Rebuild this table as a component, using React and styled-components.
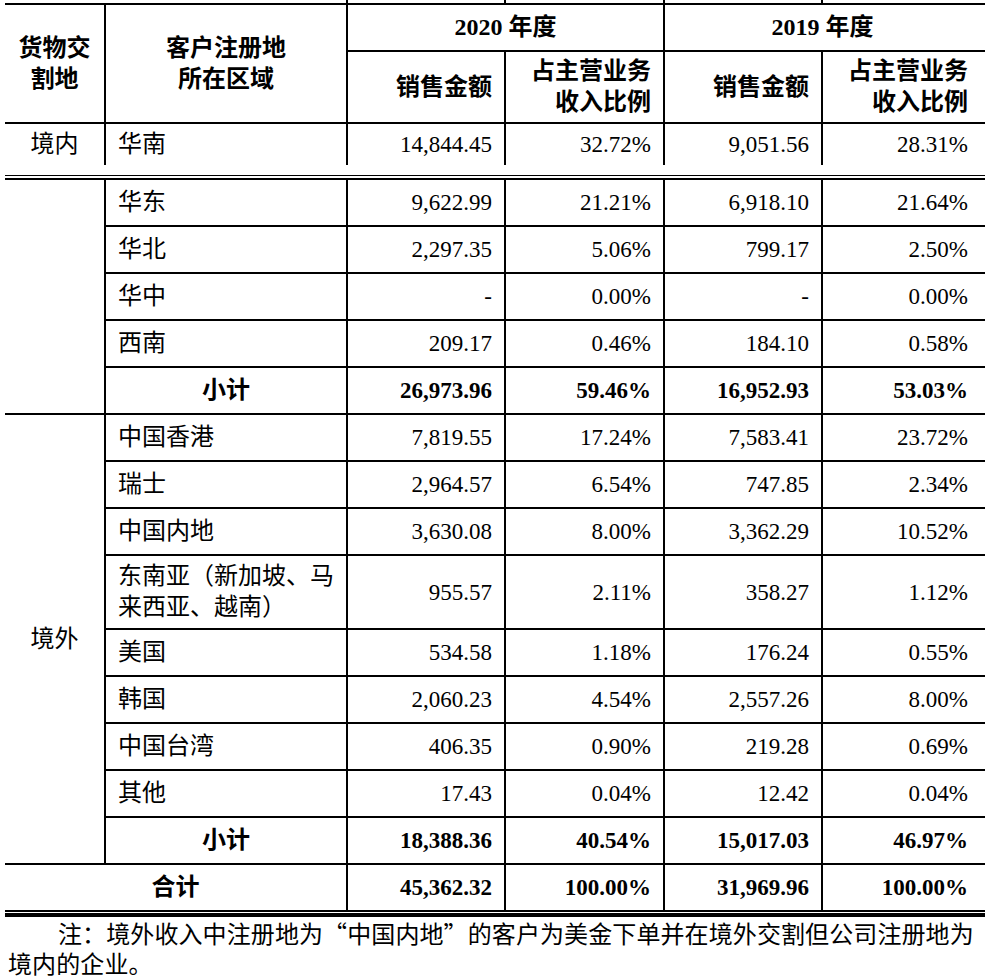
import React from "react";
import styled, { createGlobalStyle } from "styled-components";

const GlobalStyle = createGlobalStyle`
  html, body { margin: 0; padding: 0; background: #fff; }
  body {
    font-family: "Liberation Serif", "Noto Sans CJK SC", serif;
    color: #000;
  }
`;

const Page = styled.div`
  width: 985px;
  padding-left: 5px;
  box-sizing: border-box;
`;

const Stub = styled.div`
  display: grid;
  grid-template-columns: 341px 158px 159px 158px 1fr;
  height: 3px;
  width: 980px;
`;

const StubCell = styled.div`
  border-left: ${(p) => (p.$line ? "2px solid #000" : "none")};
`;

const Table = styled.table`
  width: 980px;
  border-collapse: collapse;
  table-layout: fixed;
  font-size: 23px;
  line-height: 31px;
  border-left: hidden;
  border-right: hidden;
  border-top: 2px solid #000;
  border-bottom: ${(p) => (p.$open ? "hidden" : "2px solid #000")};
`;

const Row = styled.tr`
  height: ${(p) => p.$h || 47}px;
`;

const Cell = styled.td`
  border: 2px solid #000;
  padding: 0 12px;
  text-align: ${(p) => p.$align || "left"};
  font-weight: ${(p) => (p.$bold ? 700 : 400)};
  vertical-align: middle;
  white-space: nowrap;
  &:last-child {
    padding-right: 17px;
  }
`;

const TextCell = styled(Cell)`
  font-size: 24px;
`;

const Divider = styled.div`
  width: 980px;
  border-top: 1px solid #000;
  margin-top: 10px;
  margin-bottom: 2px;
`;

const BottomRule = styled.div`
  width: 980px;
  height: 4px;
  background: #000;
  margin-top: 1px;
`;

const Note = styled.p`
  margin: 1px 0 0;
  padding-left: 3px;
  font-size: 24px;
  line-height: 30px;
  letter-spacing: 0.1px;
  text-indent: 50px;
  font-family: "Noto Sans CJK SC", "Liberation Serif", sans-serif;
`;

const Cols = () => (
  <colgroup>
    <col style={{ width: 100 }} />
    <col style={{ width: 242 }} />
    <col style={{ width: 158 }} />
    <col style={{ width: 159 }} />
    <col style={{ width: 158 }} />
    <col style={{ width: 163 }} />
  </colgroup>
);

const domestic = [
  [["华东"], "9,622.99", "21.21%", "6,918.10", "21.64%"],
  [["华北"], "2,297.35", "5.06%", "799.17", "2.50%"],
  [["华中"], "-", "0.00%", "-", "0.00%"],
  [["西南"], "209.17", "0.46%", "184.10", "0.58%"],
];

const overseas = [
  [["中国香港"], "7,819.55", "17.24%", "7,583.41", "23.72%"],
  [["瑞士"], "2,964.57", "6.54%", "747.85", "2.34%"],
  [["中国内地"], "3,630.08", "8.00%", "3,362.29", "10.52%"],
  [["东南亚（新加坡、马", "来西亚、越南）"], "955.57", "2.11%", "358.27", "1.12%", 74],
  [["美国"], "534.58", "1.18%", "176.24", "0.55%"],
  [["韩国"], "2,060.23", "4.54%", "2,557.26", "8.00%"],
  [["中国台湾"], "406.35", "0.90%", "219.28", "0.69%"],
  [["其他"], "17.43", "0.04%", "12.42", "0.04%"],
];

const Lines = ({ parts }) =>
  parts.map((t, i) => (
    <React.Fragment key={i}>
      {i > 0 && <br />}
      {t}
    </React.Fragment>
  ));

const Values = ({ v, bold }) => (
  <>
    {v.map((x, i) => (
      <Cell key={i} $align="right" $bold={bold}>
        {x}
      </Cell>
    ))}
  </>
);

export default function App() {
  return (
    <>
      <GlobalStyle />
      <Page>
        <Stub>
          <StubCell />
          <StubCell $line />
          <StubCell $line />
          <StubCell $line />
          <StubCell $line />
        </Stub>
        <Table $open>
          <Cols />
          <tbody>
            <Row $h={47}>
              <TextCell rowSpan={2} $align="center" $bold>
                <Lines parts={["货物交", "割地"]} />
              </TextCell>
              <TextCell rowSpan={2} $align="center" $bold>
                <Lines parts={["客户注册地", "所在区域"]} />
              </TextCell>
              <TextCell colSpan={2} $align="center" $bold>
                2020 年度
              </TextCell>
              <TextCell colSpan={2} $align="center" $bold>
                2019 年度
              </TextCell>
            </Row>
            <Row $h={72}>
              <TextCell $align="right" $bold>销售金额</TextCell>
              <TextCell $align="right" $bold>
                <Lines parts={["占主营业务", "收入比例"]} />
              </TextCell>
              <TextCell $align="right" $bold>销售金额</TextCell>
              <TextCell $align="right" $bold>
                <Lines parts={["占主营业务", "收入比例"]} />
              </TextCell>
            </Row>
            <Row $h={42}>
              <TextCell $align="center">境内</TextCell>
              <TextCell>华南</TextCell>
              <Values v={["14,844.45", "32.72%", "9,051.56", "28.31%"]} />
            </Row>
          </tbody>
        </Table>
        <Divider />
        <Table>
          <Cols />
          <tbody>
            {domestic.map((r, i) => (
              <Row key={r[0][0]}>
                {i === 0 && <Cell rowSpan={5} />}
                <TextCell>
                  <Lines parts={r[0]} />
                </TextCell>
                <Values v={r.slice(1, 5)} />
              </Row>
            ))}
            <Row>
              <TextCell $align="center" $bold>小计</TextCell>
              <Values bold v={["26,973.96", "59.46%", "16,952.93", "53.03%"]} />
            </Row>
            {overseas.map((r, i) => (
              <Row key={r[0][0]} $h={r[5]}>
                {i === 0 && (
                  <TextCell rowSpan={9} $align="center">
                    境外
                  </TextCell>
                )}
                <TextCell>
                  <Lines parts={r[0]} />
                </TextCell>
                <Values v={r.slice(1, 5)} />
              </Row>
            ))}
            <Row>
              <TextCell $align="center" $bold>小计</TextCell>
              <Values bold v={["18,388.36", "40.54%", "15,017.03", "46.97%"]} />
            </Row>
            <Row>
              <TextCell colSpan={2} $align="center" $bold>合计</TextCell>
              <Values bold v={["45,362.32", "100.00%", "31,969.96", "100.00%"]} />
            </Row>
          </tbody>
        </Table>
        <BottomRule />
        <Note>
          注：境外收入中注册地为“中国内地”的客户为美金下单并在境外交割但公司注册地为
          <br />
          境内的企业。
        </Note>
      </Page>
    </>
  );
}
